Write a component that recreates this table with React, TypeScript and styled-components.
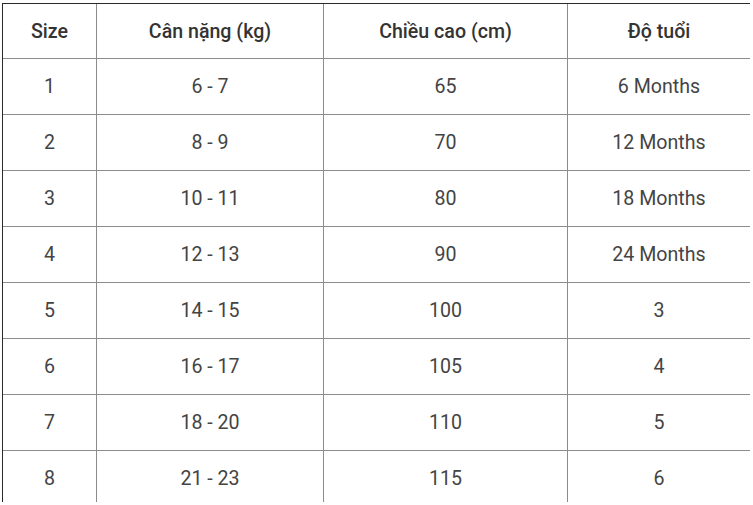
import React from "react";
import styled, { createGlobalStyle } from "styled-components";

const Global = createGlobalStyle`
  html, body { margin: 0; padding: 0; background: #fff; }
  body { font-family: Roboto, "Noto Sans", Arial, sans-serif; }
`;

const Frame = styled.div`
  margin: 3px 0 0 2px;
  width: 748px;
  height: 499px;
  overflow: hidden;
`;

const Grid = styled.div`
  display: grid;
  grid-template-columns: 94px 227px 244px 183px;
  border-left: 1px solid #2a2a2a;
  border-top: 1px solid #2a2a2a;
  box-sizing: border-box;
  width: 748px;
`;

const Cell = styled.div<{ $head?: boolean; $last?: boolean }>`
  box-sizing: border-box;
  height: ${(p) => (p.$head ? 55 : 56)}px;
  display: flex;
  align-items: center;
  justify-content: center;
  border-bottom: 1px solid #8c8c8c;
  border-right: 1px solid ${(p) => (p.$last ? "#2a2a2a" : "#8c8c8c")};
  font-size: 19.6px;
  font-weight: ${(p) => (p.$head ? 500 : 400)};
  color: ${(p) => (p.$head ? "#333" : "#444")};
`;

const headers = ["Size", "Cân nặng (kg)", "Chiều cao (cm)", "Độ tuổi"];
const rows = [
  ["1", "6 - 7", "65", "6 Months"],
  ["2", "8 - 9", "70", "12 Months"],
  ["3", "10 - 11", "80", "18 Months"],
  ["4", "12 - 13", "90", "24 Months"],
  ["5", "14 - 15", "100", "3"],
  ["6", "16 - 17", "105", "4"],
  ["7", "18 - 20", "110", "5"],
  ["8", "21 - 23", "115", "6"],
];

export default function App() {
  return (
    <>
      <Global />
      <Frame>
        <Grid>
          {headers.map((h, i) => (
            <Cell key={h} $head $last={i === 3}>
              {h}
            </Cell>
          ))}
          {rows.map((r, ri) =>
            r.map((c, ci) => (
              <Cell key={ri + "-" + ci} $last={ci === 3}>
                {c}
              </Cell>
            ))
          )}
        </Grid>
      </Frame>
    </>
  );
}
